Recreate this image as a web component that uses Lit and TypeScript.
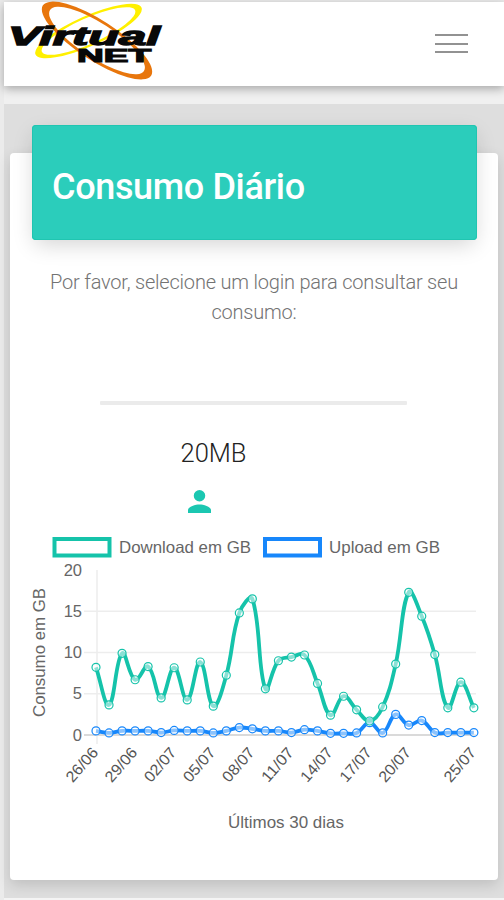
import { LitElement, html, svg, css } from "lit";
import { customElement } from "lit/decorators.js";

type Pt = { x: number; y: number };

const DOWNLOAD = [8.2, 3.65, 9.9, 6.7, 8.3, 4.5, 8.15, 4.25, 8.85, 3.5, 7.25, 14.8, 16.5, 5.6, 9, 9.45, 9.7, 6.25, 2.4, 4.7, 3.05, 1.7, 3.4, 8.6, 17.3, 14.4, 9.75, 3.3, 6.4, 3.3];
const UPLOAD = [0.5, 0.25, 0.5, 0.5, 0.5, 0.3, 0.55, 0.5, 0.5, 0.25, 0.5, 0.9, 0.75, 0.5, 0.5, 0.3, 0.65, 0.5, 0.2, 0.2, 0.25, 1.5, 0.25, 2.5, 1.2, 1.75, 0.3, 0.3, 0.3, 0.3];
const DAYS: [number, string][] = [[0, "26/06"], [3, "29/06"], [6, "02/07"], [9, "05/07"], [12, "08/07"], [15, "11/07"], [18, "14/07"], [21, "17/07"], [24, "20/07"], [29, "25/07"]];

const LEFT = 86;
const STEP = 13.03;
const BASE = 205;
const UNIT = 8.25;
const TOP = 40;

const toPoints = (values: number[]): Pt[] =>
  values.map((v, i) => ({ x: LEFT + i * STEP, y: BASE - v * UNIT }));

// Cardinal spline whose control points stay inside the plot area.
function smooth(p: Pt[]): string {
  const clamp = (y: number) => Math.max(TOP, Math.min(BASE, y));
  const handles = p.map((c, i) => {
    const a = p[i - 1] ?? c;
    const b = p[i + 1] ?? c;
    const d1 = Math.hypot(c.x - a.x, c.y - a.y);
    const d2 = Math.hypot(b.x - c.x, b.y - c.y);
    const k1 = (0.4 * d1) / (d1 + d2);
    const k2 = (0.4 * d2) / (d1 + d2);
    return {
      ax: c.x - k1 * (b.x - a.x), ay: clamp(c.y - k1 * (b.y - a.y)),
      bx: c.x + k2 * (b.x - a.x), by: clamp(c.y + k2 * (b.y - a.y)),
    };
  });
  let d = `M${p[0].x} ${p[0].y}`;
  for (let i = 1; i < p.length; i++) {
    const h = handles[i - 1];
    const g = handles[i];
    d += `C${h.bx} ${h.by} ${g.ax} ${g.ay} ${p[i].x} ${p[i].y}`;
  }
  return d;
}

@customElement("usage-chart")
export class UsageChart extends LitElement {
  static styles = css`
    :host { display: block; }
    svg { display: block; }
    text { font-family: "Liberation Sans", Arial, sans-serif; font-size: 16.5px; fill: #666; }
    .day { font-size: 15.5px; fill: #555; }
    .grid { stroke: #ededed; stroke-width: 1.5; }
    .axis { stroke: #dadada; stroke-width: 2; }
    .line { fill: none; stroke-width: 3.8; stroke-linejoin: round; }
    .dot { fill: #fff; fill-opacity: 0.5; stroke-width: 1.2; }
    .down { stroke: #15c3aa; }
    .up { stroke: #1787fb; }
    .box { fill: #fff; stroke-width: 4; }
  `;

  private series(values: number[], kind: string) {
    const pts = toPoints(values);
    return svg`
      <path class="line ${kind}" d=${smooth(pts)} />
      ${pts.map((p) => svg`<circle class="dot ${kind}" cx=${p.x} cy=${p.y} r="4" />`)}`;
  }

  render() {
    return html`
      <svg width="488" height="310" viewBox="0 0 488 310">
        <rect class="box down" x="44.5" y="9" width="55" height="16.5" />
        <text x="109" y="23" textLength="132" lengthAdjust="spacingAndGlyphs">Download em GB</text>
        <rect class="box up" x="255" y="9" width="55" height="16.5" />
        <text x="319" y="23" textLength="111" lengthAdjust="spacingAndGlyphs">Upload em GB</text>

        ${[5, 10, 15].map((v) => svg`<line class="grid" x1="74" x2="466" y1=${BASE - v * UNIT} y2=${BASE - v * UNIT} />`)}
        <line class="axis" x1="74" x2="466" y1=${BASE} y2=${BASE} />
        <line class="grid" x1="87" x2="87" y1="40" y2="214" />
        ${[0, 5, 10, 15, 20].map((v) => svg`<text x="72" y=${BASE - v * UNIT + 5.5} text-anchor="end">${v}</text>`)}
        <text transform="translate(35 187) rotate(-90)" textLength="129" lengthAdjust="spacingAndGlyphs">Consumo em GB</text>

        ${this.series(UPLOAD, "up")}
        ${this.series(DOWNLOAD, "down")}

        ${DAYS.map(([i, label]) => svg`
          <text class="day" transform="translate(${LEFT + i * STEP + 3} 223) rotate(-49)" text-anchor="end"
            textLength="40" lengthAdjust="spacingAndGlyphs">${label}</text>`)}
        <text x="218" y="297.500" textLength="116" lengthAdjust="spacingAndGlyphs">Últimos 30 dias</text>
      </svg>`;
  }
}

@customElement("app-root")
export class AppRoot extends LitElement {
  static styles = css`
    :host {
      display: block; box-sizing: border-box; width: 504px; height: 900px; overflow: hidden;
      padding: 2px 0 0 4px; background: #ebebeb; font-family: Roboto, "Liberation Sans", sans-serif;
    }
    .bar {
      position: relative; display: flex; justify-content: space-between; height: 84px;
      background: #fff; box-shadow: 0 3px 9px rgba(0, 0, 0, 0.3);
    }
    .logo { display: block; margin: -2px 0 0 -4px; }
    .logo text { font-family: "Liberation Sans", Arial, sans-serif; font-weight: 700; fill: #080808; stroke: #080808; }
    .menu { display: flex; flex-direction: column; gap: 6.5px; margin: 32px 36px 0 0; }
    .menu span { width: 33px; height: 2px; background: #929292; }
    .strip { height: 18px; background: #f0f0f0; }
    .page { height: 794px; box-sizing: border-box; padding: 49px 6px 0; background: #dedede; }
    .card {
      height: 727px; border-radius: 4px; background: #fff;
      box-shadow: 0 5px 14px rgba(0, 0, 0, 0.14); display: flow-root;
    }
    .head {
      display: flex; align-items: center; box-sizing: border-box; height: 115px;
      margin: -28px 21px 0 22px; padding: 8px 0 0 20px; border-radius: 4px;
      background: #2bcdbb; box-shadow: inset 0 0 0 1px #20c5b1, 0 7px 22px -3px rgba(0, 0, 0, 0.18);
    }
    h1 { margin: 0; font-size: 36px; font-weight: 500; line-height: 44px; color: #fff; letter-spacing: -0.35px; }
    .intro { margin: 28px 30px 0; height: 60px; font-size: 20px; line-height: 29.5px; font-weight: 300; letter-spacing: -0.2px; color: #737373; text-align: center; }
    .field { width: 307px; height: 4px; margin: 73px 0 0 90px; background: #ebebeb; border-radius: 1px; }
    .plan { width: 407px; margin: 32px 0 0; height: 32px; line-height: 32px; font-size: 25.5px; font-weight: 300; color: #222; text-align: center; }
    .user { display: block; margin: 21px 0 0 178px; }
    usage-chart { margin-top: 17px; }
    .foot { height: 2px; background: #f4f4f4; }
  `;

  render() {
    return html`
      <header class="bar">
        <svg class="logo" width="180" height="84" viewBox="0 0 180 84">
          <g fill-rule="evenodd">
            <path fill="#fff000" transform="translate(88.500 31) rotate(-24)"
              d="M-58 0a58 15 0 1 0 116 0a58 15 0 1 0-116 0ZM-51 0a51 12.800 0 1 0 102 0a51 12.800 0 1 0-102 0Z" />
            <path fill="#e8760c" transform="translate(97 40.500) rotate(33)"
              d="M-64.500 0a64.500 20 0 1 0 129 0a64.500 20 0 1 0-129 0ZM-56 0a56 17.200 0 1 0 112 0a56 17.200 0 1 0-112 0Z" />
          </g>
          <text x="8" y="45" font-size="25" font-style="italic" stroke-width="1.300"
            textLength="152" lengthAdjust="spacingAndGlyphs">Virtual</text>
          <text x="77" y="62" font-size="17.500" stroke-width="1.100"
            textLength="74" lengthAdjust="spacingAndGlyphs">NET</text>
        </svg>
        <div class="menu"><span></span><span></span><span></span></div>
      </header>
      <div class="strip"></div>
      <main class="page">
        <section class="card">
          <div class="head"><h1>Consumo Diário</h1></div>
          <p class="intro">Por favor, selecione um login para consultar seu consumo:</p>
          <div class="field"></div>
          <p class="plan">20MB</p>
          <svg class="user" width="23" height="23" viewBox="4 4 16 16" fill="#1bc7b1">
            <path d="M12 12a4 4 0 1 0 0-8a4 4 0 0 0 0 8Zm0 2c-2.670 0-8 1.340-8 4v2h16v-2c0-2.660-5.330-4-8-4Z" />
          </svg>
          <usage-chart></usage-chart>
        </section>
      </main>
      <div class="foot"></div>`;
  }
}
